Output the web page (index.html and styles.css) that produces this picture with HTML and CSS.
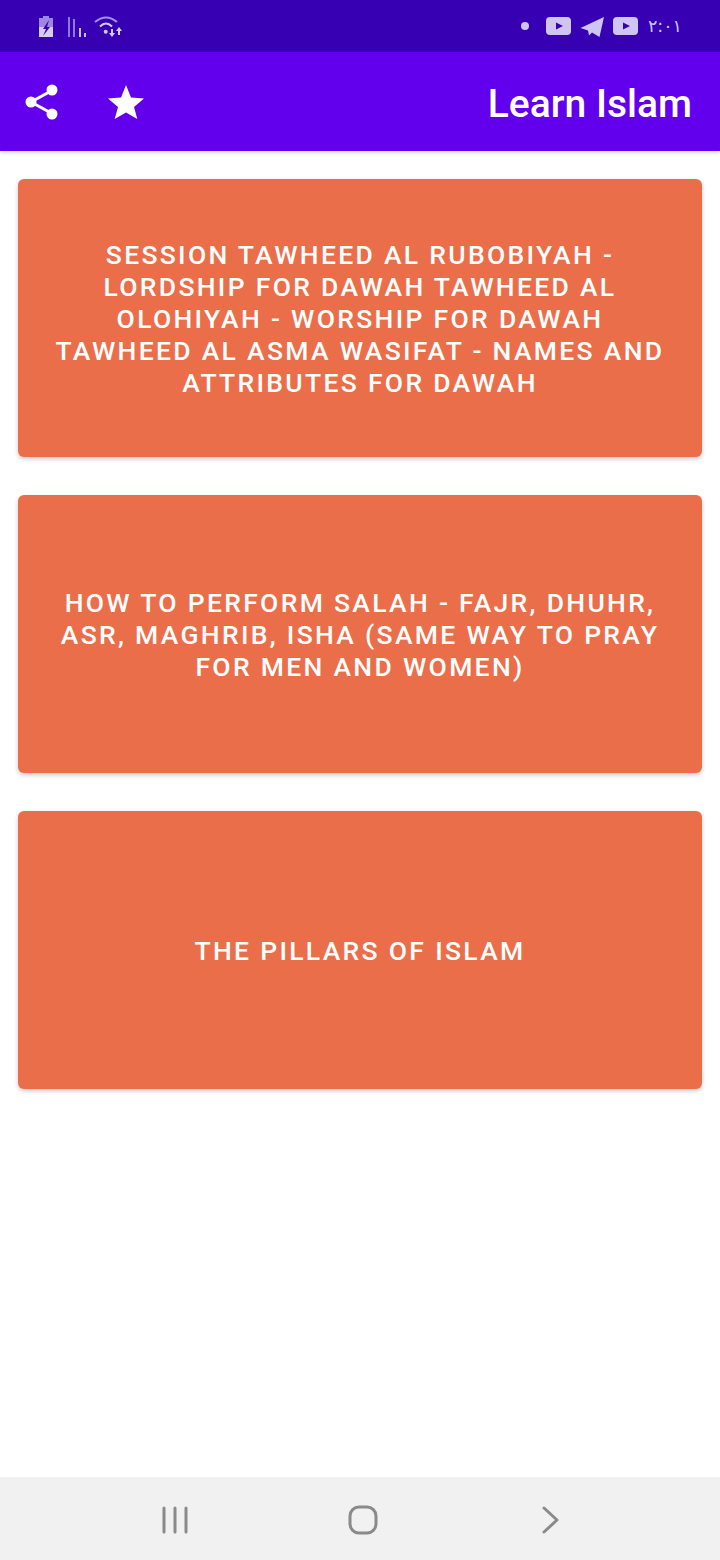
FILE: index.html
```html
<!DOCTYPE html>
<html lang="en">
<head>
    <meta charset="UTF-8">
    <title>Learn Islam</title>
    <link rel="stylesheet" href="styles.css">
</head>
<body>
    <div class="status-bar">
        <div class="status-left">
            <svg width="20" height="24" viewBox="0 0 20 24">
                <path fill="#9d87e0" d="M5 2h6v2h4v10H1V4h4z"/>
                <path fill="#d6cdf5" d="M1 13h14v10H1z"/>
                <path fill="#3700b3" d="M11 6 5 15h3l-3 7 7-9H9z"/>
            </svg>
            <svg width="20" height="24" viewBox="0 0 20 24">
                <path fill="#8f78da" d="M2 3h2v20H2zM7 5h2v18H7z"/>
                <path fill="#c9bdf0" d="M13 14h2v9h-2zM18 19h2v4h-2z"/>
            </svg>
            <svg width="30" height="24" viewBox="0 0 30 24">
                <path fill="none" stroke="#a592e0" stroke-width="2" d="M1 8Q12-1 23 8"/>
                <path fill="none" stroke="#d6cdf5" stroke-width="2" d="M6 12.500Q12 6.500 18 12.500"/>
                <circle cx="11.700" cy="17.700" r="2" fill="#d6cdf5"/>
                <path fill="#d6cdf5" d="M17 15h2v4h2l-3 4-3-4h2zM24 21h2v-4h2l-3-4-3 4h2z"/>
            </svg>
        </div>
        <div class="status-right">
            <span class="dot"></span>
            <svg class="status-app" width="26" height="20" viewBox="0 0 26 20">
                <rect width="25" height="18" y="1" rx="4" fill="#cfc5f3"/>
                <path fill="#3700b3" d="M10 6.500 17 10l-7 3.500z"/>
            </svg>
            <svg class="status-app" width="25" height="22" viewBox="0 0 25 22">
                <path fill="#cfc5f3" d="M24 2 19.500 22 12 17.500 9 20.500 8 15.500 0.500 13z"/>
            </svg>
            <svg class="status-app" width="26" height="20" viewBox="0 0 26 20">
                <rect width="25" height="18" y="1" rx="4" fill="#cfc5f3"/>
                <path fill="#3700b3" d="M10 6.500 17 10l-7 3.500z"/>
            </svg>
            <span class="clock">٢:٠١</span>
        </div>
    </div>

    <header class="app-bar">
        <div class="app-actions">
            <svg width="36" height="38" viewBox="0 0 36 38">
                <path fill="none" stroke="#fff" stroke-width="3" d="M28 7.500 7 19l21 11.500"/>
                <circle cx="28" cy="7" r="5.500" fill="#fff"/>
                <circle cx="7" cy="19" r="5.500" fill="#fff"/>
                <circle cx="28" cy="31" r="5.500" fill="#fff"/>
            </svg>
            <svg width="36" height="34" viewBox="0 0 36 34">
                <path fill="#fff" d="m18 0 5 12.500 13 1-10 8.500 3.300 12L18 27.500 6.700 34 10 22 0 13.500l13-1z"/>
            </svg>
        </div>
        <div class="app-title">Learn Islam</div>
    </header>

    <main class="content">
        <div class="card">SESSION TAWHEED AL RUBOBIYAH - LORDSHIP FOR DAWAH TAWHEED AL OLOHIYAH - WORSHIP FOR DAWAH TAWHEED AL ASMA WASIFAT - NAMES AND ATTRIBUTES FOR DAWAH</div>
        <div class="card">HOW TO PERFORM SALAH - FAJR, DHUHR, ASR, MAGHRIB, ISHA (SAME WAY TO PRAY FOR MEN AND WOMEN)</div>
        <div class="card">THE PILLARS OF ISLAM</div>
    </main>

    <nav class="nav-bar">
        <svg width="26" height="28" viewBox="0 0 26 28">
            <path fill="none" stroke="#8a8a8a" stroke-width="3" stroke-linecap="round" d="M2 2v24M13 2v24M24 2v24"/>
        </svg>
        <svg class="nav-home" width="30" height="30" viewBox="0 0 30 30">
            <rect x="2" y="2" width="26" height="26" rx="9" fill="none" stroke="#8a8a8a" stroke-width="3"/>
        </svg>
        <svg class="nav-back" width="18" height="28" viewBox="0 0 18 28">
            <path fill="none" stroke="#8a8a8a" stroke-width="3" stroke-linecap="round" stroke-linejoin="round" d="M2 2l13 12L2 26"/>
        </svg>
    </nav>
</body>
</html>
```

FILE: styles.css
```css
html, body {
    height: 100%;
}
body {
    margin: 0;
    height: 1560px;
    display: flex;
    flex-direction: column;
    background-color: #fff;
    font-family: Roboto, "Liberation Sans", sans-serif;
}

.status-bar {
    height: 52px;
    flex: none;
    display: flex;
    align-items: center;
    justify-content: space-between;
    padding: 0 38px;
    box-sizing: border-box;
    background-color: #3700b3;
}
.status-left {
    display: flex;
    align-items: center;
    gap: 8px;
}
.status-right {
    display: flex;
    align-items: center;
}
.dot {
    width: 8px;
    height: 8px;
    border-radius: 50%;
    background-color: #cfc5f3;
    margin-right: 17px;
}
.status-app {
    margin-right: 8px;
}
.clock {
    margin-left: 1px;
    color: #cfc5f3;
    font-family: "DejaVu Sans", sans-serif;
    font-size: 17.500px;
}

.app-bar {
    height: 99px;
    flex: none;
    display: flex;
    align-items: center;
    justify-content: space-between;
    padding: 0 28px 0 24px;
    box-sizing: border-box;
    background-color: #6200ee;
    box-shadow: 0 2px 4px rgba(0, 0, 0, 0.15);
    position: relative;
}
.app-actions {
    display: flex;
    align-items: center;
    gap: 48px;
}
.app-title {
    color: #fff;
    font-size: 39px;
    font-weight: 500;
    padding-top: 4px;
}

.content {
    flex: 1;
    display: flex;
    flex-direction: column;
    gap: 38px;
    padding: 28px 18px 0;
}
.card {
    height: 278px;
    display: flex;
    align-items: center;
    justify-content: center;
    padding: 1px 32px 0;
    box-sizing: border-box;
    border-radius: 6px;
    background-color: #ea6e49;
    box-shadow: 0 2px 4px rgba(0, 0, 0, 0.22);
    color: #fff;
    font-size: 26.5px;
    font-weight: 500;
    line-height: 32px;
    letter-spacing: 2.3px;
    text-align: center;
}

.nav-bar {
    height: 83px;
    flex: none;
    display: flex;
    align-items: center;
    padding: 2px 0 0 162px;
    box-sizing: border-box;
    background-color: #f1f1f1;
}
.nav-home {
    margin-left: 160px;
}
.nav-back {
    margin-left: 164px;
}
```
